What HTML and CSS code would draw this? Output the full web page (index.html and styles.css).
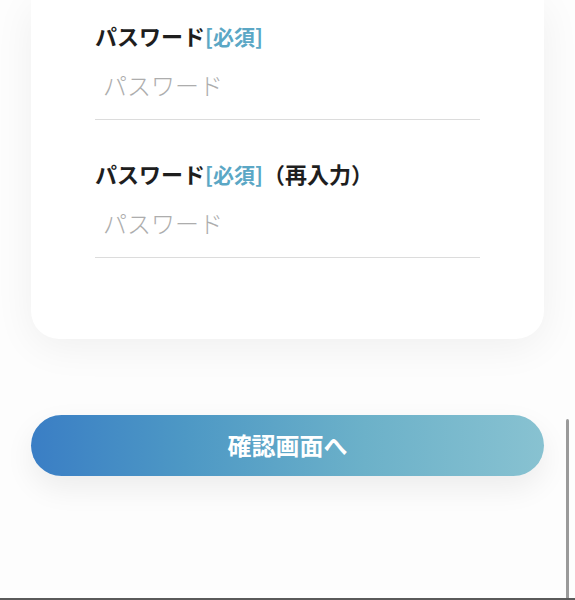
FILE: index.html
```html
<!DOCTYPE html>
<html lang="ja">
<head>
<meta charset="utf-8">
<title>パスワード</title>
<link rel="stylesheet" href="styles.css">
</head>
<body>
<main class="page">
  <section class="card">
    <div class="field">
      <label class="label" for="pw1">パスワード<span class="req">[必須]</span></label>
      <input class="input" id="pw1" type="password" placeholder="パスワード">
    </div>
    <div class="field">
      <label class="label" for="pw2">パスワード<span class="req">[必須]</span>（再入力）</label>
      <input class="input" id="pw2" type="password" placeholder="パスワード">
    </div>
  </section>
  <button class="submit" type="button">確認画面へ</button>
</main>
<div class="scroll-thumb"></div>
<div class="bottom-edge"></div>
</body>
</html>
```
FILE: styles.css
```css
* { box-sizing: border-box; }
html, body { margin: 0; padding: 0; }
body {
  background: #fdfdfd;
  font-family: "Noto Sans CJK JP", "Noto Sans", sans-serif;
  color: #222;
  height: 600px;
  overflow: hidden;
}
.page {
  padding: 0 31px;
  display: flex;
  flex-direction: column;
}
.card {
  background: #fff;
  border-radius: 0 0 28px 28px;
  box-shadow: 0 8px 40px rgba(0, 0, 0, 0.06);
  padding: 20px 64px 81px;
  display: flex;
  flex-direction: column;
  gap: 38px;
}
.field {
  display: flex;
  flex-direction: column;
  gap: 9px;
}
.label {
  font-size: 22px;
  line-height: 30px;
  font-weight: 700;
  color: #1e1e1e;
  white-space: nowrap;
}
.req {
  color: #5ba7c5;
  font-weight: 700;
  font-size: 21px;
}
.input {
  display: block;
  width: 100%;
  height: 60px;
  padding: 0 8px 10px;
  border: none;
  border-bottom: 1px solid #dcdcdc;
  background: transparent;
  font-family: inherit;
  font-size: 24px;
  color: #333;
  outline: none;
}
.input::placeholder {
  color: #adadad;
  font-family: "Noto Sans CJK JP", sans-serif;
  font-weight: 300;
  font-size: 24px;
}
.submit {
  margin-top: 76px;
  height: 61px;
  border: none;
  border-radius: 31px;
  background: linear-gradient(90deg, #3a7ec5 0%, #4d98c5 30%, #6cb1c9 65%, #88c2d1 100%);
  box-shadow: 0 12px 30px rgba(0, 0, 0, 0.07);
  color: #fff;
  font-family: "Noto Sans CJK JP", sans-serif;
  font-size: 24px;
  font-weight: 700;
  padding: 0 0 2px;
}
.scroll-thumb {
  position: fixed;
  left: 566px;
  top: 419px;
  width: 3px;
  height: 180px;
  background: #9a9a9a;
  border-radius: 2px;
}
.bottom-edge {
  position: fixed;
  left: 0;
  right: 0;
  bottom: 0;
  height: 2px;
  background: #5a5a5a;
}
```
